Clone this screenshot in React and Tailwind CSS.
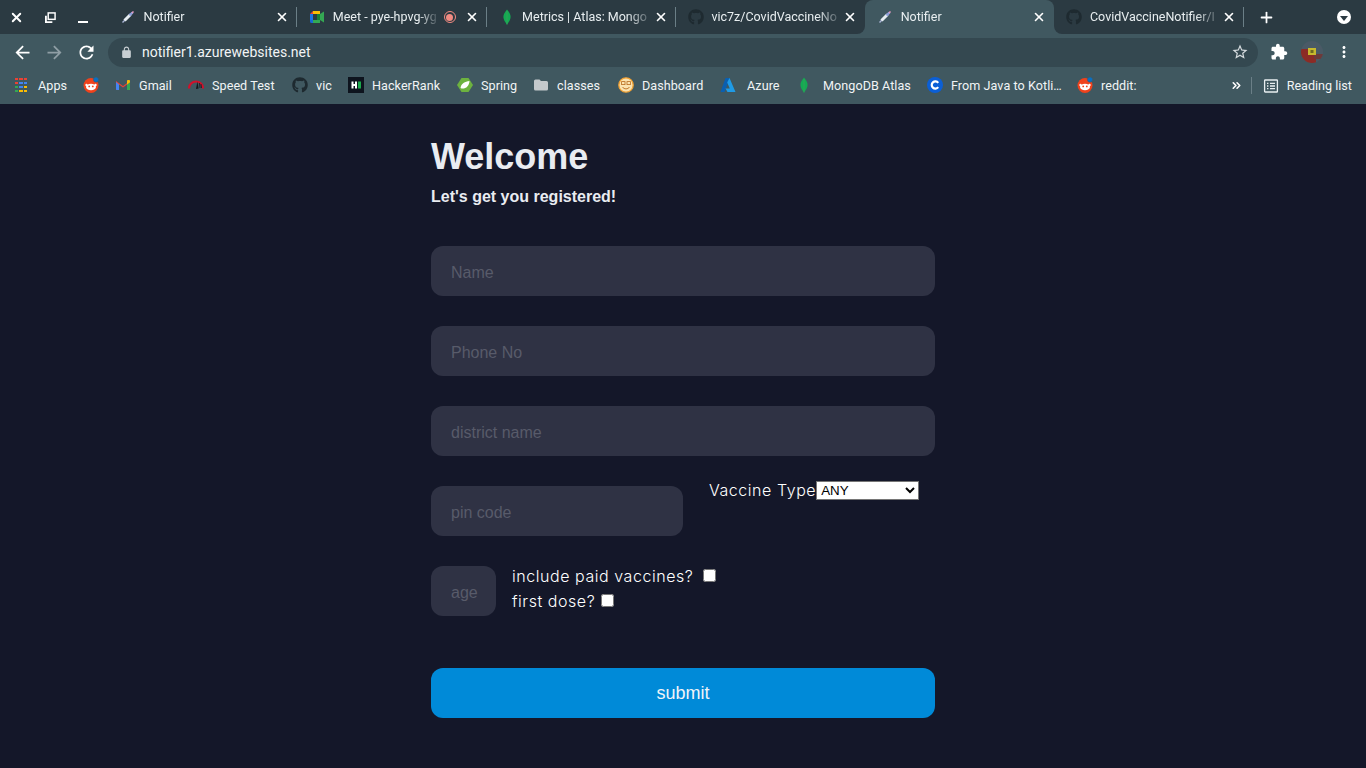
import { FaGithub } from 'react-icons/fa'
import { X, Plus, ChevronsRight } from 'lucide-react'

function Syringe() {
  return (
    <svg viewBox="0 0 16 16" className="h-4 w-4">
      <path d="M2.5 13.5 L5 11" stroke="#a9b4d6" strokeWidth="1.4" />
      <path d="M4.5 11.5 L10.5 5.5" stroke="#e6edf2" strokeWidth="3" />
      <path d="M9.5 6.5 L12.5 3.5" stroke="#8fa0dc" strokeWidth="2.4" />
      <path d="M12 4 L13.5 2.5" stroke="#e59ac0" strokeWidth="1.6" />
    </svg>
  )
}

function MeetIcon() {
  return (
    <svg viewBox="0 0 16 16" className="h-4 w-4">
      <path d="M4 2 H11 V5 H4 Z" fill="#fbbc04" />
      <path d="M4 2 L1 5 H4 Z" fill="#ea4335" />
      <path d="M1 5 H4 V11 H1 Z" fill="#1a73e8" />
      <path d="M1 11 H4 V14 H2.5 A1.5 1.5 0 0 1 1 12.5 Z" fill="#1967d2" />
      <path d="M4 11 H11 V14 H4 Z" fill="#34a853" />
      <path d="M11 5 L15 2.5 V13.5 L11 11 Z" fill="#34a853" />
      <path d="M8 5 H11 V11 H8 Z" fill="#188038" />
    </svg>
  )
}

function MongoLeaf() {
  return (
    <svg viewBox="0 0 16 16" className="h-4 w-4">
      <path d="M8 0.5 C10.5 3.5 12 6 11.5 9 C11 12 9 13.5 8.4 15.5 H7.6 C7 13.5 5 12 4.5 9 C4 6 5.5 3.5 8 0.5 Z" fill="#13aa52" />
      <path d="M8 2 V15.5" stroke="#4f9a62" strokeWidth="0.5" />
    </svg>
  )
}

function Reddit() {
  return (
    <svg viewBox="0 0 16 16" className="h-4 w-4">
      <circle cx="8" cy="8.5" r="7.5" fill="#f0421c" />
      <ellipse cx="8" cy="10" rx="5" ry="3.2" fill="#fff" />
      <circle cx="3.5" cy="8" r="1.2" fill="#fff" />
      <circle cx="12.5" cy="8" r="1.2" fill="#fff" />
      <circle cx="6.2" cy="9.4" r="0.9" fill="#f0421c" />
      <circle cx="9.8" cy="9.4" r="0.9" fill="#f0421c" />
      <circle cx="13" cy="2.6" r="2.6" fill="#0a6fc2" stroke="#405860" strokeWidth="0.5" />
    </svg>
  )
}

function AppsGrid() {
  const colors = [
    '#ea4335', '#ea4335', '#ea4335',
    '#ea4335', '#4285f4', '#4285f4',
    '#34a853', '#4285f4', '#fbbc04',
    '#34a853', '#fbbc04', '#fbbc04',
  ]
  return (
    <div className="grid h-[14px] w-[12px] grid-cols-3 grid-rows-4 gap-x-px gap-y-[2px]">
      {colors.map((c, i) => (
        <span key={i} style={{ backgroundColor: c }} />
      ))}
    </div>
  )
}

function Gmail() {
  return (
    <svg viewBox="0 0 16 16" className="h-4 w-4">
      <path d="M1 4 L8 9 L15 4 V13 H12 V7.5 L8 10.5 L4 7.5 V13 H1 Z" fill="#ea4335" />
      <path d="M1 5 V12 A1 1 0 0 0 2 13 H4 V7.5 Z" fill="#4285f4" />
      <path d="M12 7.5 V13 H14 A1 1 0 0 0 15 12 V5 Z" fill="#34a853" />
      <path d="M12 3.5 V7.5 L15 5.2 V4 C15 3 13.5 2.6 12 3.5 Z" fill="#fbbc04" />
    </svg>
  )
}

function Speed() {
  return (
    <svg viewBox="0 0 16 16" className="h-4 w-4">
      <path d="M1 11.5 A7 7 0 0 1 15 11.5" fill="none" stroke="#d0112b" strokeWidth="2.2" />
      <path d="M8 12 L9.4 4.5 L10.6 11.5 Z" fill="#16181c" />
      <path d="M11.5 6 L12 11 M13 7 L13.5 11" stroke="#16181c" strokeWidth="0.8" />
    </svg>
  )
}

function HackerRank() {
  return (
    <svg viewBox="0 0 16 16" className="h-4 w-4">
      <rect width="16" height="16" fill="#0e141e" />
      <path d="M3.5 4.5 H5.5 V7 H7 V4.5 H9 V11.5 H7 V9 H5.5 V11.5 H3.5 Z" fill="#fff" />
      <rect x="10" y="4.5" width="3" height="7" fill="#1ba94c" />
    </svg>
  )
}

function Spring() {
  return (
    <svg viewBox="0 0 16 16" className="h-4 w-4">
      <path d="M4.5 1 H11.5 L16 8 L11.5 15 H4.5 L0 8 Z" fill="#6db33f" />
      <path d="M3.5 11 C4 6.5 8 4.5 12.5 4 C12 9 9 12 4.5 11.5" fill="#fff" />
    </svg>
  )
}

function Folder() {
  return (
    <svg viewBox="0 0 16 16" className="h-4 w-4">
      <path d="M1 4 A1.5 1.5 0 0 1 2.5 2.5 H6.5 L8 4 H13.5 A1.5 1.5 0 0 1 15 5.5 V12 A1.5 1.5 0 0 1 13.5 13.5 H2.5 A1.5 1.5 0 0 1 1 12 Z" fill="#c4c9cc" />
    </svg>
  )
}

function Dashboard() {
  return (
    <svg viewBox="0 0 16 16" className="h-4 w-4">
      <circle cx="8" cy="8" r="7.2" fill="#fbe3b0" stroke="#f3a233" strokeWidth="1.3" />
      <rect x="3.6" y="4.6" width="3.4" height="3" fill="none" stroke="#b86c1f" strokeWidth="0.8" />
      <rect x="9" y="4.6" width="3.4" height="3" fill="none" stroke="#b86c1f" strokeWidth="0.8" />
      <path d="M4.5 10 C6 12.5 10 12.5 11.5 10" fill="none" stroke="#b86c1f" strokeWidth="0.9" />
    </svg>
  )
}

function Azure() {
  return (
    <svg viewBox="0 0 16 16" className="h-4 w-4">
      <path d="M5.5 1 H10 L4.5 15 H0.5 Z" fill="#0a5fb0" />
      <path d="M9.5 1 L15.5 15 H7.5 L5.5 11.5 H9.8 L7.2 5.5 Z" fill="#1f9be6" />
    </svg>
  )
}

function CIcon() {
  return (
    <svg viewBox="0 0 16 16" className="h-4 w-4">
      <circle cx="8" cy="8" r="8" fill="#0b5fd6" />
      <path d="M11.2 5.8 A3.6 3.6 0 1 0 11.2 10.2" fill="none" stroke="#fff" strokeWidth="2.2" />
    </svg>
  )
}

function ReadingList() {
  return (
    <svg viewBox="0 0 16 16" className="h-4 w-4" fill="none" stroke="#e8eef0" strokeWidth="1.3">
      <rect x="1.6" y="2" width="12.8" height="12" rx="0.6" />
      <path d="M4 5.3 H5.4 M7 5.3 H12 M4 8 H5.4 M7 8 H12 M4 10.7 H5.4 M7 10.7 H12" />
    </svg>
  )
}

function Avatar() {
  return (
    <svg viewBox="0 0 22 22" className="h-[22px] w-[22px]">
      <clipPath id="avatar-clip">
        <circle cx="11" cy="11" r="11" />
      </clipPath>
      <g clipPath="url(#avatar-clip)">
        <rect width="22" height="22" fill="#4a5a66" />
        <rect y="8" width="15" height="14" fill="#8c2b25" />
        <rect x="13" y="13" width="9" height="5" fill="#6d3a3a" />
        <rect x="7" y="7" width="8" height="7" fill="#c7b92e" />
        <rect x="9.5" y="9" width="3" height="3" fill="#6e6a20" />
      </g>
    </svg>
  )
}

function MaterialIcon({ d, size, className }) {
  return (
    <svg viewBox="0 0 24 24" style={{ width: size, height: size }} className={`shrink-0 ${className || ''}`} fill="currentColor">
      <path d={d} />
    </svg>
  )
}

const arrowBack = 'M20 11H7.83l5.59-5.59L12 4l-8 8 8 8 1.41-1.41L7.83 13H20v-2z'
const arrowForward = 'M4 11h12.17l-5.59-5.59L12 4l8 8-8 8-1.41-1.41L16.17 13H4v-2z'
const refresh = 'M17.65 6.35C16.2 4.9 14.21 4 12 4c-4.42 0-7.99 3.58-7.99 8s3.57 8 7.99 8c3.73 0 6.84-2.55 7.73-6h-2.08c-.82 2.33-3.04 4-5.65 4-3.31 0-6-2.69-6-6s2.69-6 6-6c1.66 0 3.14.69 4.22 1.78L13 11h7V4l-2.35 2.35z'
const lock = 'M18 8h-1V6c0-2.76-2.24-5-5-5S7 3.24 7 6v2H6c-1.1 0-2 .9-2 2v10c0 1.1.9 2 2 2h12c1.1 0 2-.9 2-2V10c0-1.1-.9-2-2-2zM9 6c0-1.66 1.34-3 3-3s3 1.34 3 3v2H9V6z'
const star = 'M22 9.24l-7.19-.62L12 2 9.19 8.63 2 9.24l5.46 4.73L5.82 21 12 17.27 18.18 21l-1.63-7.03L22 9.24zM12 15.4l-3.76 2.27 1-4.28-3.32-2.88 4.38-.38L12 6.1l1.71 4.04 4.38.38-3.32 2.88 1 4.28L12 15.4z'
const puzzle = 'M20.5 11H19V7c0-1.1-.9-2-2-2h-4V3.5C13 2.12 11.88 1 10.5 1S8 2.12 8 3.5V5H4c-1.1 0-1.99.9-1.99 2v3.8H3.5c1.49 0 2.7 1.21 2.7 2.7s-1.21 2.7-2.7 2.7H2V20c0 1.1.9 2 2 2h3.8v-1.5c0-1.49 1.21-2.7 2.7-2.7 1.49 0 2.7 1.21 2.7 2.7V22H17c1.1 0 2-.9 2-2v-4h1.5c1.38 0 2.5-1.12 2.5-2.5S21.88 11 20.5 11z'
const dots = 'M12 8c1.1 0 2-.9 2-2s-.9-2-2-2-2 .9-2 2 .9 2 2 2zm0 2c-1.1 0-2 .9-2 2s.9 2 2 2 2-.9 2-2-.9-2-2-2zm0 6c-1.1 0-2 .9-2 2s.9 2 2 2 2-.9 2-2-.9-2-2-2z'

const tabs = [
  { title: 'Notifier', icon: <Syringe />, sep: true },
  { title: 'Meet - pye-hpvg-yg', icon: <MeetIcon />, recording: true, sep: true },
  { title: 'Metrics | Atlas: Mongo', icon: <MongoLeaf />, sep: true },
  { title: 'vic7z/CovidVaccineNo', icon: <FaGithub className="h-4 w-4 text-[#1e2a30]" /> },
  { title: 'Notifier', icon: <Syringe />, active: true },
  { title: 'CovidVaccineNotifier/I', icon: <FaGithub className="h-4 w-4 text-[#1e2a30]" />, sep: true },
]

const bookmarks = [
  { label: 'Apps', w: 'w-[29px]', icon: <AppsGrid />, gap: 'gap-[11px]' },
  { icon: <Reddit /> },
  { label: 'Gmail', w: 'w-[33px]', icon: <Gmail /> },
  { label: 'Speed Test', w: 'w-[64px]', icon: <Speed /> },
  { label: 'vic', w: 'w-[16px]', icon: <FaGithub className="h-4 w-4 text-[#1e2a30]" /> },
  { label: 'HackerRank', w: 'w-[69px]', icon: <HackerRank /> },
  { label: 'Spring', w: 'w-[36px]', icon: <Spring /> },
  { label: 'classes', w: 'w-[45px]', icon: <Folder /> },
  { label: 'Dashboard', w: 'w-[62px]', icon: <Dashboard /> },
  { label: 'Azure', w: 'w-[33px]', icon: <Azure />, gap: 'gap-[11px]' },
  { label: 'MongoDB Atlas', w: 'w-[88px]', icon: <MongoLeaf />, gap: 'gap-[11px]' },
  { label: 'From Java to Kotli…', w: 'w-[110px]', icon: <CIcon /> },
  { label: 'reddit:', w: 'w-[35px]', icon: <Reddit /> },
]

function Tab({ tab }) {
  return (
    <div className={`relative flex h-[34px] w-[189.3px] shrink-0 items-center pl-3 ${tab.active ? 'rounded-t-lg bg-[#405860]' : ''}`}>
      {tab.active ? (
        <>
          <span className="absolute bottom-0 left-[-8px] h-2 w-2 bg-[#405860]">
            <span className="block h-2 w-2 rounded-br-lg bg-[#2b3a42]" />
          </span>
          <span className="absolute bottom-0 right-[-8px] h-2 w-2 bg-[#405860]">
            <span className="block h-2 w-2 rounded-bl-lg bg-[#2b3a42]" />
          </span>
        </>
      ) : null}
      <span className="flex w-4 shrink-0 justify-center">{tab.icon}</span>
      <span className="ml-[7.5px] min-w-0 flex-1 overflow-hidden whitespace-nowrap pt-px text-[12.5px] text-[#e8eef0] [mask-image:linear-gradient(to_right,black_80%,transparent)]">
        {tab.title}
      </span>
      {tab.recording ? (
        <span className="ml-1 mr-[9px] flex h-3 w-3 shrink-0 items-center justify-center rounded-full border border-[#f28b82]">
          <span className="h-[7px] w-[7px] rounded-full bg-[#f28b82]" />
        </span>
      ) : null}
      <X className="mr-2 h-[14px] w-[14px] shrink-0 text-white" strokeWidth={2.8} />
      {tab.sep ? <span className="absolute right-0 top-[7px] h-5 w-px bg-[#6b7f87]" /> : null}
    </div>
  )
}

function Field({ placeholder, className }) {
  return (
    <input
      placeholder={placeholder}
      className={`h-[50px] rounded-xl bg-[#2f3244] pl-5 pt-[3px] font-['Liberation_Sans',sans-serif] text-base text-white outline-none placeholder:text-[#585b6a] ${className}`}
    />
  )
}

export default function App() {
  return (
    <div className="flex min-h-screen flex-col bg-[#141729] font-['Roboto',sans-serif]">
      <div className="flex h-[34px] items-center bg-[#2b3a42]">
        <div className="flex w-[108px] shrink-0 items-center text-white">
          <X className="ml-[9px] h-[15px] w-[15px]" strokeWidth={3} />
          <svg viewBox="0 0 12 12" className="ml-[21px] h-[11px] w-[11px]" fill="none" stroke="#fff" strokeWidth="1.6">
            <rect x="3.5" y="1" width="7.5" height="7" />
            <path d="M1 4 V11 H8" strokeWidth="2" />
          </svg>
          <span className="ml-[22px] mt-[9px] h-[2px] w-[10px] bg-white" />
        </div>
        {tabs.map((t, i) => (
          <Tab key={i} tab={t} />
        ))}
        <Plus className="ml-[14px] h-[17px] w-[17px] text-white" strokeWidth={2.5} />
        <span className="ml-[62px] flex h-[14px] w-[14px] items-center justify-center rounded-full bg-white">
          <span className="mt-[2px] border-x-[4px] border-t-[5px] border-x-transparent border-t-[#2b3a42]" />
        </span>
      </div>

      <div className="flex h-[33px] items-center bg-[#405860] pt-[3px] text-white">
        <MaterialIcon d={arrowBack} size={21} className="ml-3" />
        <MaterialIcon d={arrowForward} size={21} className="ml-[11px] text-[#8f9ea5]" />
        <MaterialIcon d={refresh} size={21} className="ml-[11px]" />
        <div className="ml-[11px] flex h-[29px] w-[1150px] items-center rounded-full bg-[#344850] pl-[12px] pr-[9px]">
          <MaterialIcon d={lock} size={13} className="text-[#c8cfd3]" />
          <span className="ml-[9px] flex-1 text-sm text-[#f1f4f5]">notifier1.azurewebsites.net</span>
          <MaterialIcon d={star} size={18} className="text-[#d5dbde]" />
        </div>
        <MaterialIcon d={puzzle} size={18} className="ml-3" />
        <span className="ml-[13px]">
          <Avatar />
        </span>
        <MaterialIcon d={dots} size={18} className="ml-3" />
      </div>

      <div className="flex h-[37px] items-center bg-[#405860] pl-[15px] text-[12.6px] text-[#f1f4f5]">
        <div className="flex items-center gap-4">
          {bookmarks.map((b, i) => (
            <div key={i} className={`flex items-center ${b.gap || 'gap-2'}`}>
              {b.icon}
              {b.label ? <span className={`whitespace-nowrap pt-px tracking-[0.05px] ${b.w}`}>{b.label}</span> : null}
            </div>
          ))}
        </div>
        <ChevronsRight className="ml-auto h-[13px] w-[13px] text-white" strokeWidth={3} />
        <span className="ml-2 h-[17px] w-px bg-[#6b7f87]" />
        <span className="ml-[11px]">
          <ReadingList />
        </span>
        <span className="ml-2 mr-[14px] whitespace-nowrap pt-px">Reading list</span>
      </div>

      <div className="mx-auto w-[504px] pt-[32px] font-['Liberation_Sans',sans-serif] text-[#e9ecf1]">
        <h1 className="text-[36px] font-bold leading-[42px]">Welcome</h1>
        <p className="mt-[10px] text-base font-bold leading-[18px]">Let's get you registered!</p>

        <div className="mt-[40px] flex flex-col gap-[30px]">
          <Field placeholder="Name" className="w-full" />
          <Field placeholder="Phone No" className="w-full" />
          <Field placeholder="district name" className="w-full" />
          <div className="flex items-start">
            <Field placeholder="pin code" className="w-[252px]" />
            <div className="ml-[26px] flex -translate-y-[5px] items-center font-['Inter',sans-serif] text-base font-light leading-5 tracking-[0.55px] text-white">
              <span className="-mt-[2px]">Vaccine Type</span>
              <select className="h-[19px] w-[103px] border border-[#767676] bg-white font-['Liberation_Sans',sans-serif] text-[13.33px] tracking-normal text-black">
                <option>ANY</option>
              </select>
            </div>
          </div>
          <div className="flex items-start">
            <Field placeholder="age" className="w-[65px]" />
            <div className="ml-4 flex flex-col gap-[5px] font-['Inter',sans-serif] text-base font-light leading-5 tracking-[0.55px] text-white">
              <label className="flex items-center gap-[10px]">
                include paid vaccines?
                <input type="checkbox" className="-mt-px h-[13px] w-[13px]" />
              </label>
              <label className="flex items-center gap-[6px]">
                first dose?
                <input type="checkbox" className="-mt-px h-[13px] w-[13px]" />
              </label>
            </div>
          </div>
        </div>

        <button className="mt-[52px] h-[50px] w-full rounded-xl bg-[#008ad8] text-lg text-[#f1f4f8]">submit</button>
      </div>
    </div>
  )
}
